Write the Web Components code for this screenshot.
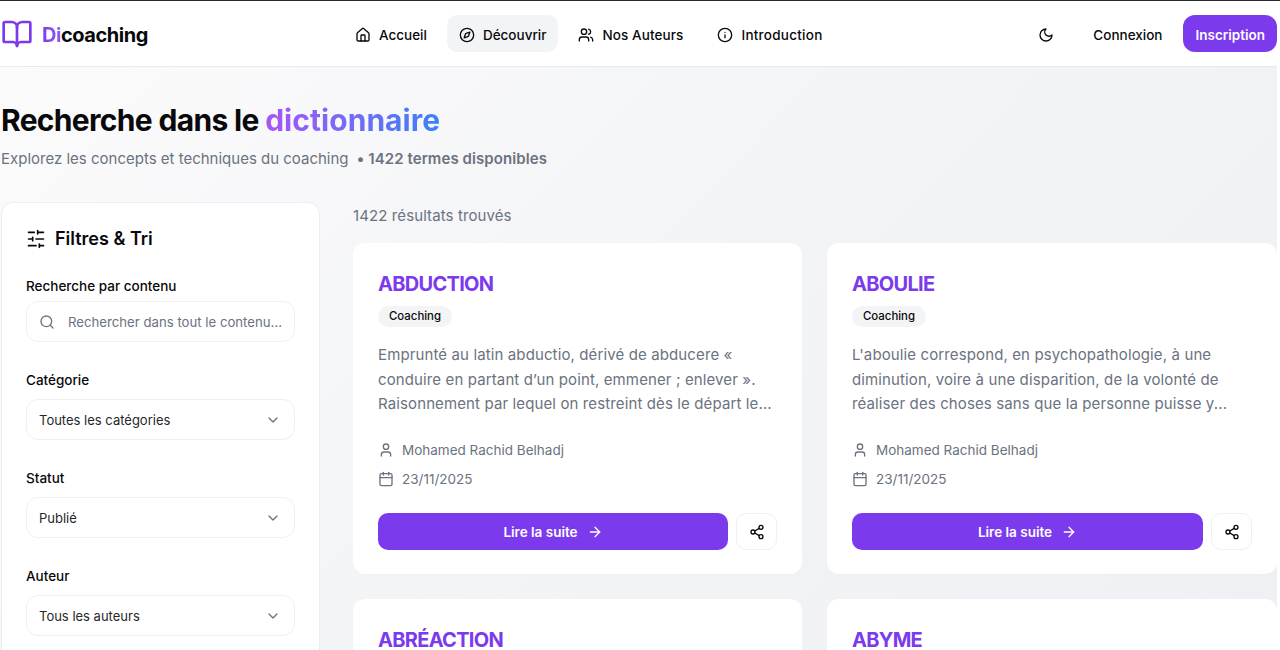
<!DOCTYPE html>
<html lang="fr">
<head>
<meta charset="utf-8">
<title>Dicoaching</title>
<style>
  html, body { margin: 0; height: 650px; overflow: hidden; background: #fff; }
  body { font-family: Inter, "Liberation Sans", sans-serif; color: #09090b; border-top: 1px solid #27272a; box-sizing: border-box; }
  dc-page { width: 1277px; }
</style>
</head>
<body>
<dc-page>
  <dc-header slot="header"></dc-header>
  <dc-hero slot="hero"></dc-hero>
  <dc-filters slot="side"></dc-filters>
  <dc-results slot="main"></dc-results>
</dc-page>

<script>
const ICONS = {
  book: '<path d="M12 7v14"/><path d="M3 18a1 1 0 0 1-1-1V4a1 1 0 0 1 1-1h5a4 4 0 0 1 4 4 4 4 0 0 1 4-4h5a1 1 0 0 1 1 1v13a1 1 0 0 1-1 1h-6a3 3 0 0 0-3 3 3 3 0 0 0-3-3z"/>',
  home: '<path d="M15 21v-8a1 1 0 0 0-1-1h-4a1 1 0 0 0-1 1v8"/><path d="M3 10a2 2 0 0 1 .709-1.528l7-5.999a2 2 0 0 1 2.582 0l7 5.999A2 2 0 0 1 21 10v9a2 2 0 0 1-2 2H5a2 2 0 0 1-2-2z"/>',
  compass: '<circle cx="12" cy="12" r="10"/><path d="m16.24 7.76-1.804 5.411a2 2 0 0 1-1.265 1.265L7.76 16.24l1.804-5.411a2 2 0 0 1 1.265-1.265z"/>',
  users: '<path d="M16 21v-2a4 4 0 0 0-4-4H6a4 4 0 0 0-4 4v2"/><circle cx="9" cy="7" r="4"/><path d="M22 21v-2a4 4 0 0 0-3-3.87"/><path d="M16 3.13a4 4 0 0 1 0 7.75"/>',
  info: '<circle cx="12" cy="12" r="10"/><path d="M12 16v-4"/><path d="M12 8h.01"/>',
  moon: '<path d="M12 3a6 6 0 0 0 9 9 9 9 0 1 1-9-9Z"/>',
  sliders: '<path d="M21 4h-7M10 4H3M21 12h-9M8 12H3M21 20h-5M12 20H3M14 2v4M8 10v4M16 18v4"/>',
  search: '<circle cx="11" cy="11" r="8"/><path d="m21 21-4.3-4.3"/>',
  chevron: '<path d="m6 9 6 6 6-6"/>',
  user: '<path d="M19 21v-2a4 4 0 0 0-4-4H9a4 4 0 0 0-4 4v2"/><circle cx="12" cy="7" r="4"/>',
  calendar: '<path d="M8 2v4"/><path d="M16 2v4"/><rect x="3" y="4" width="18" height="18" rx="2"/><path d="M3 10h18"/>',
  arrow: '<path d="M5 12h14"/><path d="m12 5 7 7-7 7"/>',
  share: '<circle cx="18" cy="5" r="3"/><circle cx="6" cy="12" r="3"/><circle cx="18" cy="19" r="3"/><path d="m8.59 13.51 6.83 3.98"/><path d="m15.41 6.51-6.82 3.98"/>'
};

const icon = (name, size = 16, color = 'currentColor') =>
  `<svg width="${size}" height="${size}" viewBox="0 0 24 24" fill="none" stroke="${color}" stroke-width="2" stroke-linecap="round" stroke-linejoin="round" style="flex:none;display:block">${ICONS[name]}</svg>`;

class Page extends HTMLElement {
  constructor() {
    super();
    this.attachShadow({mode: 'open'}).innerHTML = `
      <style>
        :host { display: block; height: 649px; overflow: hidden; }
        .bg { background: linear-gradient(135deg, #fbfbfc 0%, #f3f4f6 50%, #eef0f3 100%); padding: 0 0 0 1px; height: 583px; }
        .columns { display: grid; grid-template-columns: 319px 923px; column-gap: 33px; }
      </style>
      <slot name="header"></slot>
      <div class="bg">
        <slot name="hero"></slot>
        <div class="columns">
          <slot name="side"></slot>
          <slot name="main"></slot>
        </div>
      </div>`;
  }
}

class Header extends HTMLElement {
  constructor() {
    super();
    this.attachShadow({mode: 'open'}).innerHTML = `
      <style>
        :host { display: flex; align-items: center; height: 65px; background: #fff; border-bottom: 1px solid #e9eaee; font-size: 13.5px; font-weight: 500; }
        .logo { display: flex; align-items: center; gap: 9px; width: 343px; padding-left: 1px; box-sizing: border-box; font-size: 20px; font-weight: 700; letter-spacing: -0.45px; }
        .logo span { padding-top: 2px; }
        .logo b { background: linear-gradient(90deg, #7c3aed, #8b5cf6); -webkit-background-clip: text; background-clip: text; color: transparent; font-weight: 700; }
        nav { display: flex; gap: 8px; flex: 1; }
        .actions { display: flex; align-items: center; gap: 8px; }
        .moon { width: 40px; height: 37px; padding-top: 2px; box-sizing: border-box; display: flex; align-items: center; justify-content: center; margin-right: 7px; }
        .btn { display: flex; align-items: center; height: 37px; padding: 2px 12px 0; box-sizing: border-box; border-radius: 10px; }
        .ghost { margin-right: 1px; }
        .primary { background: #7c3aed; color: #fff; font-weight: 600; border-radius: 12px; }
      </style>
      <div class="logo">${icon('book', 32, '#7c3aed')}<span><b>Di</b>coaching</span></div>
      <nav>
        <dc-nav-link icon="home">Accueil</dc-nav-link>
        <dc-nav-link icon="compass" active>Découvrir</dc-nav-link>
        <dc-nav-link icon="users" style="letter-spacing:.1px">Nos Auteurs</dc-nav-link>
        <dc-nav-link icon="info" style="letter-spacing:.25px;margin-left:2px">Introduction</dc-nav-link>
      </nav>
      <div class="actions">
        <span class="moon">${icon('moon')}</span>
        <span class="btn ghost">Connexion</span>
        <span class="btn primary">Inscription</span>
      </div>`;
  }
}

class NavLink extends HTMLElement {
  connectedCallback() {
    if (this.shadowRoot) return;
    this.attachShadow({mode: 'open'}).innerHTML = `
      <style>
        :host { display: flex; align-items: center; gap: 8px; height: 37px; box-sizing: border-box; padding: 2px 12px 0; border-radius: 10px; }
        :host([active]) { background: #f3f4f6; }
      </style>
      ${icon(this.getAttribute('icon'))}<slot></slot>`;
  }
}

class Hero extends HTMLElement {
  constructor() {
    super();
    this.attachShadow({mode: 'open'}).innerHTML = `
      <style>
        :host { display: block; padding: 33px 0 31px; }
        h1 { margin: 0; font-size: 30px; line-height: 40px; font-weight: 700; letter-spacing: -0.67px; color: #09090b; }
        h1 span { letter-spacing: .05px; background: linear-gradient(90deg, #a855f7, #3b82f6); -webkit-background-clip: text; background-clip: text; color: transparent; }
        p { margin: 7px 0 0; font-size: 15px; line-height: 24px; color: #6b7280; }
        b { font-weight: 600; margin-left: 4px; letter-spacing: .08px; }
      </style>
      <h1>Recherche dans le <span>dictionnaire</span></h1>
      <p>Explorez les concepts et techniques du coaching <b>• 1422 termes disponibles</b></p>`;
  }
}

class Filters extends HTMLElement {
  constructor() {
    super();
    this.attachShadow({mode: 'open'}).innerHTML = `
      <style>
        :host { display: block; background: #fff; border: 1px solid #eceef1; border-radius: 12px; padding: 22px 24px 0; box-sizing: border-box; height: 500px; }
        h2 { display: flex; align-items: center; gap: 9px; margin: 0 0 23px; font-size: 18px; line-height: 28px; font-weight: 600; color: #09090b; }
      </style>
      <h2>${icon('sliders', 20)}Filtres &amp; Tri</h2>
      <dc-field label="Recherche par contenu" icon="search" placeholder="Rechercher dans tout le contenu..."></dc-field>
      <dc-field label="Catégorie" value="Toutes les catégories"></dc-field>
      <dc-field label="Statut" value="Publié"></dc-field>
      <dc-field label="Auteur" value="Tous les auteurs"></dc-field>`;
  }
}

class Field extends HTMLElement {
  connectedCallback() {
    if (this.shadowRoot) return;
    const placeholder = this.getAttribute('placeholder');
    const inner = placeholder
      ? `${icon(this.getAttribute('icon'), 16, '#6b7280')}<span class="ph">${placeholder}</span>`
      : `<span class="val">${this.getAttribute('value')}</span><span class="chev">${icon('chevron', 16, '#71717a')}</span>`;
    this.attachShadow({mode: 'open'}).innerHTML = `
      <style>
        :host { display: block; margin-bottom: 28px; }
        label { display: block; font-size: 13.5px; line-height: 20px; font-weight: 500; margin-bottom: ${placeholder ? 5 : 9}px; color: #09090b; }
        .box { display: flex; align-items: center; gap: 13px; height: 41px; box-sizing: border-box; padding: 0 13px 0 12px; border: 1px solid #eef0f3; border-radius: 12px; background: #fff; }
        .ph { font-size: 13.2px; color: #6b7280; white-space: nowrap; }
        .val { flex: 1; font-size: 13px; color: #27272a; }
      </style>
      <label>${this.getAttribute('label')}</label>
      <div class="box">${inner}</div>`;
  }
}

class Results extends HTMLElement {
  constructor() {
    super();
    this.attachShadow({mode: 'open'}).innerHTML = `
      <style>
        :host { display: block; }
        .count { font-size: 15px; line-height: 24px; letter-spacing: .1px; color: #6b7280; margin: 2px 0 15px; }
        .grid { display: grid; grid-template-columns: 449px 450px; gap: 25px; }
      </style>
      <p class="count">1422 résultats trouvés</p>
      <div class="grid">
        <dc-card title="ABDUCTION" excerpt="Emprunté au latin abductio, dérivé de abducere « conduire en partant d’un point, emmener ; enlever ». Raisonnement par lequel on restreint dès le départ le..."></dc-card>
        <dc-card title="ABOULIE" excerpt="L'aboulie correspond, en psychopathologie, à une diminution, voire à une disparition, de la volonté de réaliser des choses sans que la personne puisse y..."></dc-card>
        <dc-card title="ABRÉACTION"></dc-card>
        <dc-card title="ABYME"></dc-card>
      </div>`;
  }
}

class Card extends HTMLElement {
  connectedCallback() {
    if (this.shadowRoot) return;
    const excerpt = this.getAttribute('excerpt');
    // les cartes du bas sont coupées par la fenêtre, seul le titre est visible
    const body = excerpt ? `
      <span class="chip">Coaching</span>
      <p>${excerpt}</p>
      <div class="meta">${icon('user', 16, '#6b7280')}Mohamed Rachid Belhadj</div>
      <div class="meta date">${icon('calendar', 16, '#6b7280')}23/11/2025</div>
      <div class="actions">
        <span class="read">Lire la suite ${icon('arrow')}</span>
        <span class="share">${icon('share')}</span>
      </div>` : '';
    this.attachShadow({mode: 'open'}).innerHTML = `
      <style>
        :host { display: block; background: #fff; border-radius: 12px; padding: 25px 25px 0; box-sizing: border-box; height: 331px; box-shadow: 0 1px 2px rgba(0,0,0,.02); }
        h3 { margin: 0 0 6px; font-size: 20px; line-height: 32px; font-weight: 700; color: #7c3aed; letter-spacing: -0.7px; }
        .chip { display: inline-block; font-size: 11.4px; line-height: 21px; font-weight: 500; padding: 0 11px; border-radius: 11px; background: #f3f4f6; color: #09090b; vertical-align: top; }
        p { margin: 16px 0 0; height: 74px; font-size: 15px; line-height: 24.5px; letter-spacing: .12px; color: #6b7280; }
        .meta { display: flex; align-items: center; gap: 8px; height: 20px; font-size: 13.5px; color: #6b7280; margin-top: 23px; }
        .date { margin-top: 9px; }
        .actions { display: flex; gap: 8px; margin-top: 24px; }
        .read { flex: 1; height: 37px; display: flex; align-items: center; justify-content: center; gap: 9px; background: #7c3aed; color: #fff; font-size: 13.5px; font-weight: 600; border-radius: 10px; }
        .share { width: 41px; height: 37px; box-sizing: border-box; border: 1px solid #eef0f3; border-radius: 10px; display: flex; align-items: center; justify-content: center; background: #fff; }
      </style>
      <h3>${this.getAttribute('title')}</h3>${body}`;
  }
}

customElements.define('dc-page', Page);
customElements.define('dc-header', Header);
customElements.define('dc-nav-link', NavLink);
customElements.define('dc-hero', Hero);
customElements.define('dc-filters', Filters);
customElements.define('dc-field', Field);
customElements.define('dc-results', Results);
customElements.define('dc-card', Card);
</script>
</body>
</html>
